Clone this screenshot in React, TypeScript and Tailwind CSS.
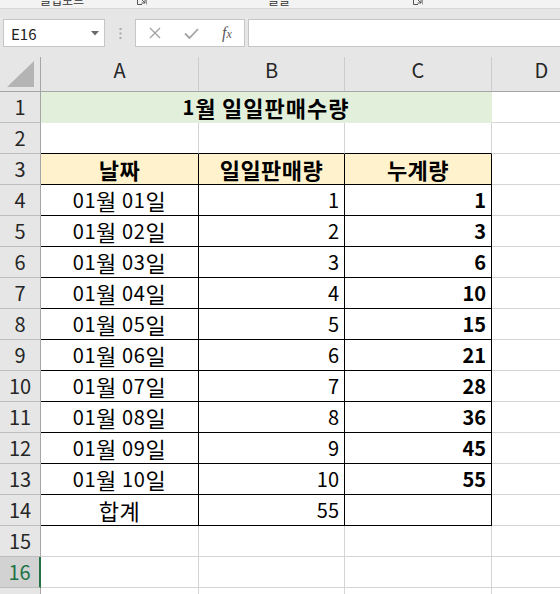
import React from "react";

const FONT = "font-['Noto_Sans_CJK_KR','Noto_Sans',sans-serif]";

function K({ t }: { t: string }) {
  const parts = t.split(/([\uAC00-\uD7A3]+)/);
  return (
    <>
      {parts.map((p, i) =>
        /[\uAC00-\uD7A3]/.test(p) ? (
          <span key={i} className="text-[22px]">
            {p}
          </span>
        ) : (
          <span key={i} className="whitespace-pre">
            {p}
          </span>
        )
      )}
    </>
  );
}

function RowHeader({ n, selected }: { n: number; selected?: boolean }) {
  return selected ? (
    <div className="w-[41px] h-full flex-none flex items-center justify-center bg-[#d2d2d2] text-[#217346] text-[20px] leading-none border-r-2 border-b border-r-[#217346] border-b-[#bdbdbd]">
      {n}
    </div>
  ) : (
    <div className="w-[41px] h-full flex-none flex items-center justify-center bg-[#e6e6e6] text-[#262626] text-[20px] leading-none border-r border-b border-r-[#a6a6a6] border-b-[#bdbdbd]">
      {n}
    </div>
  );
}

function GridCells({ from }: { from: number }) {
  return (
    <>
      {from <= 0 && <div className="w-[158px] h-full flex-none border-r border-b border-[#d4d4d4]" />}
      {from <= 1 && <div className="w-[146px] h-full flex-none border-r border-b border-[#d4d4d4]" />}
      {from <= 2 && <div className="w-[147px] h-full flex-none border-r border-b border-[#d4d4d4]" />}
      {from <= 3 && <div className="w-[100px] h-full flex-none border-r border-b border-[#d4d4d4]" />}
      <div className="w-[120px] h-full flex-none border-r border-b border-[#d4d4d4]" />
    </>
  );
}

function DataRow({
  n,
  a,
  b,
  c,
  header,
}: {
  n: number;
  a: string;
  b: string;
  c: string;
  header?: boolean;
}) {
  if (header) {
    return (
      <div className="flex h-[31px]">
        <RowHeader n={n} />
        <div className="w-[158px] h-full flex-none flex items-center justify-center bg-[#fff2cc] border-r border-b border-black text-[20px] leading-none font-bold text-black tracking-[0.5px]">
          <K t={a} />
        </div>
        <div className="w-[146px] h-full flex-none flex items-center justify-center bg-[#fff2cc] border-r border-b border-black text-[20px] leading-none font-bold text-black tracking-[0.5px]">
          <K t={b} />
        </div>
        <div className="w-[147px] h-full flex-none flex items-center justify-center bg-[#fff2cc] border-r border-b border-black text-[20px] leading-none font-bold text-black tracking-[0.5px]">
          <K t={c} />
        </div>
        <GridCells from={3} />
      </div>
    );
  }
  return (
    <div className="flex h-[31px]">
      <RowHeader n={n} />
      <div className="w-[158px] h-full flex-none flex items-center justify-center border-r border-b border-black text-[20px] leading-none text-black tracking-[0.6px]">
        <K t={a} />
      </div>
      <div className="w-[146px] h-full flex-none flex items-center justify-end pr-[5px] border-r border-b border-black text-[20px] leading-none text-black">
        {b}
      </div>
      <div className="w-[147px] h-full flex-none flex items-center justify-end pr-[5px] border-r border-b border-black text-[20px] leading-none font-bold text-black">
        {c}
      </div>
      <GridCells from={3} />
    </div>
  );
}

function Launcher() {
  return (
    <svg width="10" height="10" viewBox="0 0 10 10">
      <path d="M0.5 0 V9.5 H5" stroke="#555" fill="none" strokeWidth="1" />
      <path d="M3 3 L8 8 M8 4.5 V8 H4.5" stroke="#555" fill="none" strokeWidth="1" />
      <path d="M9.5 0 V9.5" stroke="#999" strokeWidth="1" />
    </svg>
  );
}

export default function App() {
  const days = Array.from({ length: 10 }, (_, i) => i + 1);
  const cums: number[] = [];
  days.reduce((acc, d) => {
    const v = acc + d;
    cums.push(v);
    return v;
  }, 0);
  const pad = (x: number) => (x < 10 ? `0${x}` : `${x}`);

  return (
    <div className={`w-[560px] h-[594px] overflow-hidden bg-white ${FONT}`}>
      {/* ribbon strip (cut off) */}
      <div className="h-[9px] bg-[#f3f3f3] border-b border-[#d6d6d6] overflow-hidden flex items-start text-[#333]">
        <div className="w-[40px] flex-none" />
        <div className="w-[97px] flex-none text-[12px] leading-[12px] mt-[-6px]">클립보드</div>
        <div className="w-[131px] flex-none mt-[-5px]">
          <Launcher />
        </div>
        <div className="w-[145px] flex-none text-[12px] leading-[12px] mt-[-6px]">글꼴</div>
        <div className="w-[20px] flex-none mt-[-5px]">
          <Launcher />
        </div>
      </div>

      {/* formula bar band */}
      <div className="h-[48px] bg-[#e6e6e6] flex items-start pt-[10px]">
        <div className="ml-[3px] w-[102px] h-[28px] flex-none bg-white border border-[#c6c6c6] flex items-center justify-between pl-[7px] pr-[5px]">
          <span className="text-[15px] leading-none text-[#222]">E16</span>
          <svg width="8" height="5" viewBox="0 0 8 5">
            <path d="M0 0 H8 L4 4.5 Z" fill="#6a6a6a" />
          </svg>
        </div>
        <div className="w-[30px] h-[28px] flex-none flex items-center justify-center">
          <svg width="3" height="11" viewBox="0 0 3 11">
            <rect x="0.5" y="0" width="2" height="2" fill="#a8a8a8" />
            <rect x="0.5" y="4.5" width="2" height="2" fill="#a8a8a8" />
            <rect x="0.5" y="9" width="2" height="2" fill="#a8a8a8" />
          </svg>
        </div>
        <div className="w-[110px] h-[28px] flex-none bg-white border border-[#c6c6c6] flex items-center">
          <div className="w-[37px] flex-none flex justify-center">
            <svg width="12" height="12" viewBox="0 0 12 12">
              <path d="M1 1 L11 11 M11 1 L1 11" stroke="#a3a3a3" strokeWidth="1.4" fill="none" />
            </svg>
          </div>
          <div className="w-[36px] flex-none flex justify-center">
            <svg width="15" height="11" viewBox="0 0 15 11">
              <path d="M1 5.5 L5.5 10 L14 1" stroke="#a3a3a3" strokeWidth="1.8" fill="none" />
            </svg>
          </div>
          <div className="w-[36px] flex-none flex justify-center">
            <span className="italic font-['Liberation_Serif',serif] text-[16px] leading-none text-[#5a5a5a]">
              f<span className="text-[12px]">x</span>
            </span>
          </div>
        </div>
        <div className="ml-[3px] w-[320px] h-[28px] flex-none bg-white border border-[#c6c6c6]" />
      </div>

      {/* column headers */}
      <div className="flex h-[35px] bg-[#e6e6e6] border-b border-[#a6a6a6] text-[20px] leading-none text-[#262626]">
        <div className="w-[41px] h-full flex-none border-r border-[#a6a6a6] flex items-center justify-center">
          <svg width="27" height="26" viewBox="0 0 27 26">
            <path d="M27 0 V26 H0 Z" fill="#b4b4b4" />
          </svg>
        </div>
        <div className="w-[158px] h-full flex-none border-r border-[#cccccc] flex items-center justify-center pb-[9px]">A</div>
        <div className="w-[146px] h-full flex-none border-r border-[#cccccc] flex items-center justify-center pb-[9px]">B</div>
        <div className="w-[147px] h-full flex-none border-r border-[#cccccc] flex items-center justify-center pb-[9px]">C</div>
        <div className="w-[100px] h-full flex-none border-r border-[#cccccc] flex items-center justify-center pb-[9px]">D</div>
        <div className="w-[120px] h-full flex-none border-r border-[#cccccc] flex items-center justify-center pb-[9px]">E</div>
      </div>

      {/* row 1 */}
      <div className="flex h-[31px]">
        <RowHeader n={1} />
        <div className="w-[451px] h-full flex-none flex items-center justify-center bg-[#e2efda] border-r border-b border-[#e2efda] text-[20px] leading-none font-bold text-black tracking-[1px]">
          <K t="1월 일일판매수량" />
        </div>
        <GridCells from={3} />
      </div>

      {/* row 2 */}
      <div className="flex h-[31px]">
        <RowHeader n={2} />
        <div className="w-[158px] h-full flex-none border-r border-b border-r-[#d4d4d4] border-b-black" />
        <div className="w-[146px] h-full flex-none border-r border-b border-r-[#d4d4d4] border-b-black" />
        <div className="w-[147px] h-full flex-none border-r border-b border-r-[#d4d4d4] border-b-black" />
        <GridCells from={3} />
      </div>

      <DataRow n={3} a="날짜" b="일일판매량" c="누계량" header />

      {days.map((d, i) => (
        <DataRow key={d} n={4 + i} a={`01월 ${pad(d)}일`} b={`${d}`} c={`${cums[i]}`} />
      ))}

      {/* row 14 */}
      <div className="flex h-[31px]">
        <RowHeader n={14} />
        <div className="w-[158px] h-full flex-none flex items-center justify-center border-r border-b border-black text-[20px] leading-none text-black tracking-[0.6px]">
          <K t="합계" />
        </div>
        <div className="w-[146px] h-full flex-none flex items-center justify-end pr-[5px] border-r border-b border-black text-[20px] leading-none text-black">
          55
        </div>
        <div className="w-[147px] h-full flex-none border-r border-b border-black" />
        <GridCells from={3} />
      </div>

      <div className="flex h-[31px]">
        <RowHeader n={15} />
        <GridCells from={0} />
      </div>
      <div className="flex h-[31px]">
        <RowHeader n={16} selected />
        <GridCells from={0} />
      </div>
      <div className="flex h-[31px]">
        <RowHeader n={17} />
        <GridCells from={0} />
      </div>
    </div>
  );
}
